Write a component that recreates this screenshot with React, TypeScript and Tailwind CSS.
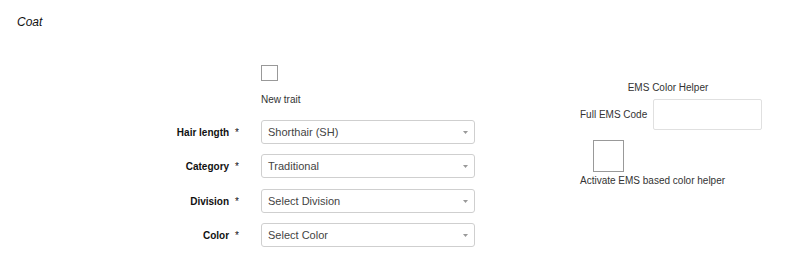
import React from 'react';

const fields = [
  { label: 'Hair length', value: 'Shorthair (SH)', mt: 'mt-[14px]' },
  { label: 'Category', value: 'Traditional', mt: 'mt-[10px]' },
  { label: 'Division', value: 'Select Division', mt: 'mt-[11px]' },
  { label: 'Color', value: 'Select Color', mt: 'mt-[10px]' },
];

const SelectBox: React.FC<{ value: string }> = ({ value }) => (
  <div className="w-[214px] h-[24px] border border-[#cfcfcf] rounded-[3px] bg-white flex items-center justify-between pl-[6px] pr-[6px]">
    <span className="text-[11px] text-[#444]">{value}</span>
    <svg width="5" height="3" viewBox="0 0 5 3">
      <path d="M0 0 L5 0 L2.5 3 Z" fill="#999" />
    </svg>
  </div>
);

export default function App() {
  return (
    <div className="w-[800px] h-[278px] bg-white text-[#333] font-['Liberation_Sans',Arial,sans-serif]">
      <div className="pl-[17px] pt-[15px] text-[12px] leading-[14px] italic text-[#111]">Coat</div>

      <div className="flex mt-[36px]">
        {/* left form */}
        <div className="flex flex-col">
          <div className="flex">
            <div className="w-[261px]" />
            <div className="flex flex-col">
              <div className="w-[17px] h-[16px] border border-[#999] bg-white" />
              <div className="mt-[13px] text-[10px] leading-[12px]">New trait</div>
            </div>
          </div>

          {fields.map((f) => (
            <div key={f.label} className={`flex items-center ${f.mt}`}>
              <div className="w-[240px] text-right text-[10px] font-bold text-[#111] pr-[1px]">
                {f.label}
                <span className="font-normal ml-[6px]">*</span>
              </div>
              <div className="w-[21px]" />
              <SelectBox value={f.value} />
            </div>
          ))}
        </div>

        {/* EMS helper */}
        <div className="ml-[104px] flex flex-col mt-[17px]">
          <div className="w-[178px] text-center text-[10px] leading-[12px]">EMS Color Helper</div>
          <div className="flex items-center mt-[5px]">
            <span className="text-[10px] ml-[1px]">Full EMS Code</span>
            <div className="ml-[6px] w-[109px] h-[31px] border border-[#e0e0e0] rounded-[2px] bg-white" />
          </div>
          <div className="ml-[14px] mt-[10px] w-[31px] h-[32px] border border-[#999] bg-white" />
          <div className="mt-[3px] text-[10px] leading-[12px] ml-[1px]">Activate EMS based color helper</div>
        </div>
      </div>
    </div>
  );
}
